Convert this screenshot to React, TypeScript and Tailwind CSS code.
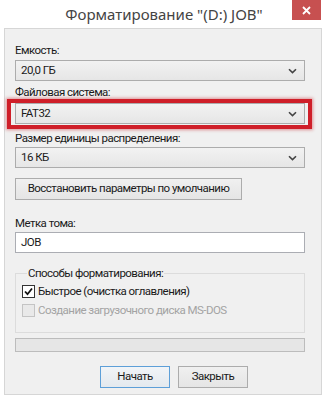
const font = "font-['Roboto','Liberation_Sans',sans-serif]";
const txt = "text-[11.5px] tracking-[-0.55px] text-[#1a1a1a]";

function Chevron() {
  return (
    <svg width="9" height="6" viewBox="0 0 9 6" className="shrink-0">
      <path d="M1 1.2 L4.5 4.6 L8 1.2" fill="none" stroke="#444" strokeWidth="1.6" />
    </svg>
  );
}

function Combo({ value }: { value: string }) {
  return (
    <div className={`flex h-[21px] w-[290px] items-center justify-between border border-[#acacac] bg-gradient-to-b from-[#f2f2f2] to-[#e6e6e6] pl-[5px] pr-[7px] ${txt}`}>
      <span>{value}</span>
      <Chevron />
    </div>
  );
}

function Label({ text, className = "" }: { text: string; className?: string }) {
  return <div className={`h-[14px] leading-[14px] ${txt} ${className}`}>{text}</div>;
}

export default function App() {
  return (
    <div className={`relative flex h-[400px] w-[328px] flex-col bg-white ${font}`}>
      <div className="flex h-[28px] items-center justify-center font-['Noto_Sans',sans-serif] text-[15px] text-[#444]">
        Форматирование "(D:) JOB"
      </div>
      <button className="absolute right-[7px] top-0 flex h-[20px] w-[29px] items-center justify-center bg-[#c75050]">
        <svg width="9" height="9" viewBox="0 0 9 9">
          <path d="M1 1 L8 8 M8 1 L1 8" stroke="#fff" strokeWidth="1.8" />
        </svg>
      </button>

      <div className="ml-[4px] flex h-[367px] w-[318px] flex-col border border-[#d6d6d6] bg-[#f0f0f0] pl-[10px]">
        <Label text="Емкость:" className="mt-[14px]" />
        <div className="mt-[3px]">
          <Combo value="20,0 ГБ" />
        </div>

        <Label text="Файловая система:" className="mt-[4px]" />
        <div className="relative mt-[4px] w-[290px]">
          <Combo value="FAT32" />
          <div className="absolute -bottom-[5px] -left-[8px] -right-[7px] -top-[4px] border-[4px] border-[#cf1f29] shadow-[0_0_3px_1px_rgba(200,30,40,0.45)]" />
        </div>

        <Label text="Размер единицы распределения:" className="mt-[7px]" />
        <div className="mt-[2px]">
          <Combo value="16 КБ" />
        </div>

        <button className={`mt-[10px] h-[22px] w-[227px] whitespace-nowrap border border-[#acacac] bg-gradient-to-b from-[#f0f0f0] to-[#e5e5e5] ${txt}`}>
          Восстановить параметры по умолчанию
        </button>

        <Label text="Метка тома:" className="mt-[16px]" />
        <div className={`mt-[2px] flex h-[21px] w-[290px] items-center border border-[#abadb3] bg-white pl-[5px] ${txt}`}>
          JOB
        </div>

        <fieldset className="mt-[13px] h-[67px] w-[290px] border border-[#dcdcdc] pl-[6px]">
          <legend className={`ml-[5px] px-[1px] leading-[14px] ${txt}`}>Способы форматирования:</legend>
          <div className={`mt-[4px] flex items-center gap-[3px] leading-[14px] ${txt}`}>
            <span className="flex h-[13px] w-[13px] items-center justify-center border border-[#333] bg-white">
              <svg width="9" height="9" viewBox="0 0 9 9">
                <path d="M1 4.5 L3.5 7.2 L8 1.5" fill="none" stroke="#111" strokeWidth="1.8" />
              </svg>
            </span>
            Быстрое (очистка оглавления)
          </div>
          <div className="mt-[5px] flex items-center gap-[3px] text-[11.5px] leading-[14px] tracking-[-0.55px] text-[#a3a3a3]">
            <span className="h-[13px] w-[13px] border border-[#c4c4c4] bg-[#e9e9e9]" />
            Создание загрузочного диска MS-DOS
          </div>
        </fieldset>

        <div className="mt-[5px] h-[14px] w-[290px] border border-[#bcbcbc] bg-[#e6e6e6]" />

        <div className="ml-[85px] mt-[14px] flex gap-[8px]">
          <button className={`h-[22px] w-[70px] border border-[#5d9fd8] bg-gradient-to-b from-[#f1f4f7] to-[#e4e9ee] ${txt}`}>
            Начать
          </button>
          <button className={`h-[22px] w-[70px] border border-[#acacac] bg-gradient-to-b from-[#f0f0f0] to-[#e5e5e5] ${txt}`}>
            Закрыть
          </button>
        </div>
      </div>
    </div>
  );
}
